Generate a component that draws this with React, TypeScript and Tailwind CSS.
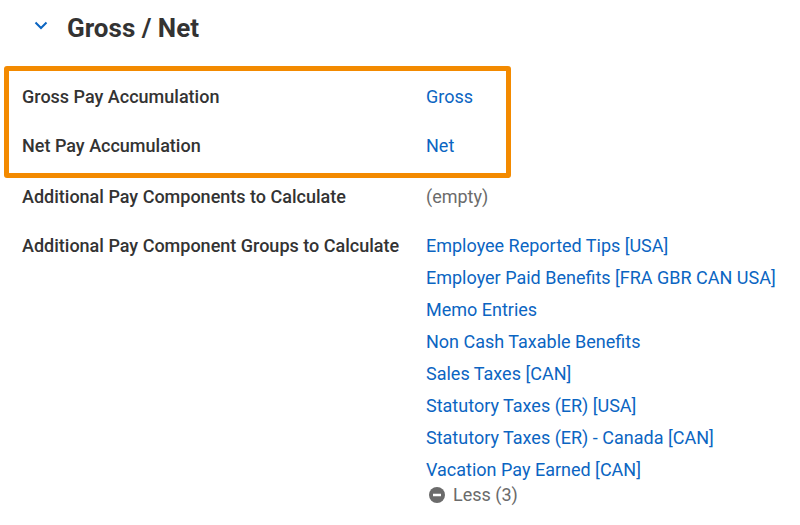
import React from 'react'

const groups = [
  'Employee Reported Tips [USA]',
  'Employer Paid Benefits [FRA GBR CAN USA]',
  'Memo Entries',
  'Non Cash Taxable Benefits',
  'Sales Taxes [CAN]',
  'Statutory Taxes (ER) [USA]',
  'Statutory Taxes (ER) - Canada [CAN]',
  'Vacation Pay Earned [CAN]',
]

function Row({ label, children }: { label: string; children: React.ReactNode }) {
  return (
    <div className="flex h-[49px] items-center">
      <div className="w-[404px] shrink-0 font-medium text-[#333333]">{label}</div>
      <div>{children}</div>
    </div>
  )
}

export default function App() {
  return (
    <div className="w-[800px] h-[525px] bg-white text-[18px] overflow-hidden" style={{ fontFamily: 'Roboto, sans-serif' }}>
      {/* header */}
      <div className="flex items-center h-[56px] pl-[34px]">
        <svg width="14" height="9" viewBox="0 0 14 9" className="mr-[19px] mb-[6px]">
          <path d="M1.5 1.5 L7 7 L12.5 1.5" fill="none" stroke="#0b65c2" strokeWidth="2" />
        </svg>
        <h1 className="text-[26px] font-bold text-[#333333]">Gross / Net</h1>
      </div>

      {/* highlighted rows */}
      <div className="mt-[10px] ml-[4px] w-[507px] border-[5px] border-[#f38a00] rounded-[3px] pl-[13px] pt-[1px] pb-[3px]">
        <Row label="Gross Pay Accumulation">
          <span className="text-[#0b65c2]">Gross</span>
        </Row>
        <Row label="Net Pay Accumulation">
          <span className="text-[#0b65c2]">Net</span>
        </Row>
      </div>

      <div className="pl-[22px]">
        <div className="flex h-[36px] items-center">
          <div className="w-[404px] shrink-0 font-medium text-[#333333]">Additional Pay Components to Calculate</div>
          <div className="text-[#6b6b6b]">(empty)</div>
        </div>
        <div className="flex pt-[16px]">
          <div className="w-[404px] shrink-0 font-medium text-[#333333] leading-[32px]">Additional Pay Component Groups to Calculate</div>
          <div className="flex flex-col">
            {groups.map(g => (
              <span key={g} className="text-[#0b65c2] leading-[32px]">{g}</span>
            ))}
            <div className="flex items-center gap-[8px] -mt-[5px] pl-[3px] text-[#6b6b6b]">
              <svg width="16" height="16" viewBox="0 0 16 16">
                <circle cx="8" cy="8" r="8" fill="#6b6b6b" />
                <rect x="4" y="6.75" width="8" height="2.5" fill="#ffffff" />
              </svg>
              <span>Less (3)</span>
            </div>
          </div>
        </div>
      </div>
    </div>
  )
}
